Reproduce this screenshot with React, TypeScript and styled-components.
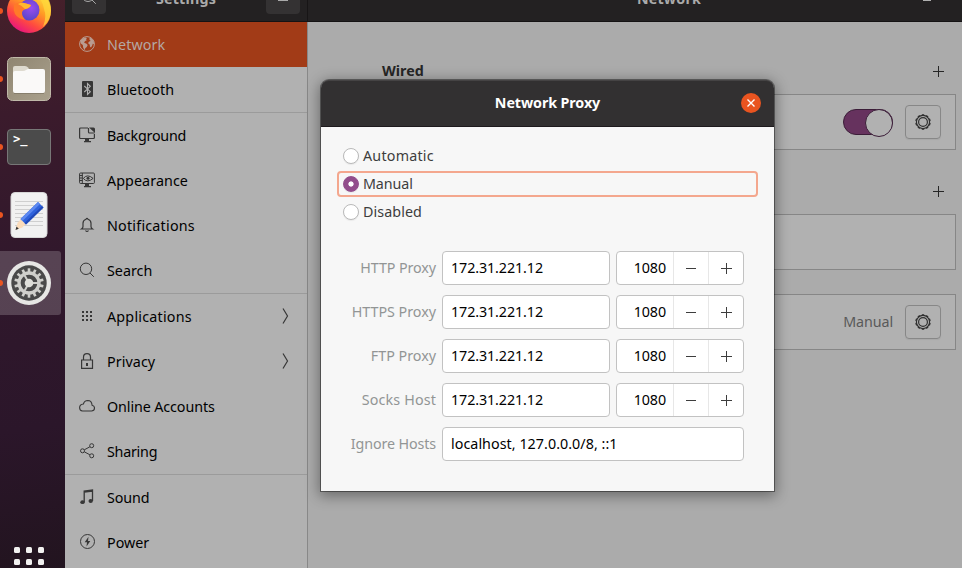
import React from 'react';
import styled, { createGlobalStyle } from 'styled-components';

const Global = createGlobalStyle`
  * { box-sizing: border-box; }
  html, body { margin: 0; padding: 0; overflow: hidden; }
  body { font-family: "Noto Sans", "Open Sans", sans-serif; font-size: 14.3px; color: #000; }
  svg { display: block; flex: none; }
`;

const Desktop = styled.div`
  position: relative;
  display: flex;
  width: 962px;
  height: 568px;
  overflow: hidden;
`;

const Dock = styled.nav`
  display: flex;
  flex-direction: column;
  gap: 4px;
  flex: none;
  width: 65px;
  height: 568px;
  overflow: hidden;
  background: linear-gradient(172deg, #45202a 0%, #3b1b2c 20%, #31182c 45%, #2b162a 75%, #22141f 100%);
`;

const DockItem = styled.div<{ $active?: boolean }>`
  position: relative;
  display: flex;
  align-items: center;
  justify-content: center;
  flex: none;
  width: 61px;
  height: 64px;
  padding-right: 3px;
  border-radius: 0 3px 3px 0;
  background: ${(p) => (p.$active ? 'rgba(255,255,255,0.19)' : 'transparent')};
  &:first-child { margin-top: -21px; }
  &::before {
    content: '';
    position: absolute;
    left: -3px;
    top: 29px;
    width: 6px;
    height: 6px;
    border-radius: 50%;
    background: #e95420;
  }
`;

const AppGrid = styled.div`
  display: grid;
  grid-template-columns: repeat(3, 6px);
  grid-auto-rows: 6px;
  gap: 6px;
  margin: auto 0 3px 14px;
`;

const GridDot = styled.i`
  border-radius: 1.5px;
  background: #f2f1f0;
`;

const Sidebar = styled.aside`
  display: flex;
  flex-direction: column;
  flex: none;
  width: 243px;
  border-right: 1px solid #888;
  background: #b1b1b1;
`;

const TitleBar = styled.header<{ $side?: boolean }>`
  display: flex;
  align-items: flex-end;
  justify-content: space-between;
  flex: none;
  height: 22px;
  width: ${(p) => (p.$side ? '243px' : 'auto')};
  padding: 0 7px 7px;
  overflow: hidden;
  background: #232122;
  border-bottom: 1px solid #151314;
  border-right: ${(p) => (p.$side ? '1px solid #171516' : '0')};
  color: #aaa;
`;

const BarButton = styled.div`
  display: flex;
  align-items: center;
  justify-content: center;
  width: 34px;
  height: 34px;
  border-radius: 4px;
  background: #343233;
`;

const BarTitle = styled.div<{ $inset?: number }>`
  flex: 1;
  padding: 0 0 5px ${(p) => p.$inset ?? 0}px;
  text-align: center;
  font-weight: 700;
  line-height: 20px;
  letter-spacing: 0.2px;
`;

const MinimizeMark = styled.i`
  width: 8px;
  height: 1px;
  margin: 0 24px 13px 0;
  background: #b0b0b0;
`;

const NavRow = styled.div<{ $active?: boolean; $divided?: boolean; $spacing: number }>`
  display: flex;
  align-items: center;
  flex: none;
  box-sizing: content-box;
  height: 45px;
  padding: 0 17px 0 14px;
  gap: 12px;
  border-bottom: ${(p) => (p.$divided ? '1px solid #9b9b9b' : '0')};
  background: ${(p) => (p.$active ? '#a23b17' : 'transparent')};
  color: ${(p) => (p.$active ? '#b5a8a3' : '#000')};
  letter-spacing: ${(p) => p.$spacing}px;
  line-height: 20px;
  > svg { margin-bottom: 1px; color: ${(p) => (p.$active ? '#b99c91' : '#373737')}; }
`;

const NavLabel = styled.span`
  flex: 1;
  white-space: nowrap;
`;

const Panel = styled.main`
  display: flex;
  flex-direction: column;
  flex: 1;
  background: #ababab;
`;

const PanelBody = styled.div`
  display: flex;
  flex-direction: column;
  padding: 35px 6px 0 74px;
`;

const SectionHead = styled.div`
  display: flex;
  align-items: center;
  justify-content: space-between;
  height: 28px;
  margin-bottom: 9px;
  padding-right: 12px;
  color: #262626;
  > svg { margin-left: auto; }
`;

const SectionTitle = styled.h2`
  margin: 0;
  font-size: 14.3px;
  line-height: 20px;
  font-weight: 700;
`;

const Card = styled.section<{ $after: number }>`
  display: flex;
  align-items: center;
  justify-content: flex-end;
  height: 56px;
  margin-bottom: ${(p) => p.$after}px;
  padding-right: 14px;
  border: 1px solid #868686;
  background: #b1b1b1;
`;

const CardValue = styled.span`
  padding-bottom: 1px;
  line-height: 20px;
  letter-spacing: -0.1px;
  color: #595959;
`;

const Toggle = styled.div`
  display: flex;
  justify-content: flex-end;
  width: 50px;
  height: 26px;
  border: 1px solid #3b1d38;
  border-radius: 13px;
  background: #66325e;
  &::after {
    content: '';
    width: 26px;
    height: 26px;
    margin: -1px;
    border: 1px solid #3b1d38;
    border-radius: 50%;
    background: #b1b1b1;
  }
`;

const GearButton = styled.div`
  display: flex;
  align-items: center;
  justify-content: center;
  width: 36px;
  height: 34px;
  margin-left: 12px;
  border: 1px solid #878787;
  border-radius: 4px;
  box-shadow: 0 1px 1px rgba(0, 0, 0, 0.06);
  color: #303030;
`;

const Dialog = styled.div`
  position: absolute;
  left: 321px;
  top: 80px;
  display: flex;
  flex-direction: column;
  width: 453px;
  height: 411px;
  border-radius: 8px 8px 0 0;
  background: #f7f7f7;
  box-shadow: 0 0 0 1px rgba(0, 0, 0, 0.4), 0 3px 14px 2px rgba(0, 0, 0, 0.38);
`;

const DialogBar = styled.header`
  display: grid;
  grid-template-columns: 1fr auto 1fr;
  align-items: center;
  height: 47px;
  padding: 0 13px;
  border-bottom: 1px solid #1e1a1d;
  border-radius: 8px 8px 0 0;
  background: #323031;
  box-shadow: inset 0 1px 0 #454344;
`;

const DialogTitle = styled.h1`
  grid-column: 2;
  margin: 0;
  font-size: 14.3px;
  line-height: 20px;
  font-weight: 700;
  letter-spacing: -0.1px;
  color: #fff;
`;

const CloseButton = styled.div`
  display: flex;
  align-items: center;
  justify-content: center;
  justify-self: end;
  width: 20px;
  height: 20px;
  border-radius: 50%;
  background: #e95420;
`;

const Choices = styled.div`
  display: flex;
  flex-direction: column;
  gap: 2px;
  padding: 16px 16px 0;
`;

const Choice = styled.div<{ $focused?: boolean; $spacing: number }>`
  display: flex;
  align-items: center;
  gap: 4px;
  height: 26px;
  padding-left: 4px;
  border: 2px solid ${(p) => (p.$focused ? '#f4a78e' : 'transparent')};
  border-radius: 4px;
  color: #3d3d3d;
  line-height: 20px;
  letter-spacing: ${(p) => p.$spacing}px;
`;

const Radio = styled.i<{ $on?: boolean }>`
  width: 16px;
  height: 16px;
  border: 1px solid ${(p) => (p.$on ? '#924d8b' : '#b9b9b9')};
  border-radius: 50%;
  background: ${(p) => (p.$on ? 'radial-gradient(circle, #fff 2.2px, #924d8b 3px)' : '#fff')};
  box-shadow: 0 1px 1px rgba(0, 0, 0, 0.06);
`;

const Form = styled.div`
  display: grid;
  grid-template-columns: 85px 168px 128px;
  grid-auto-rows: 34px;
  gap: 10px 6px;
  padding: 26px 0 0 30px;
`;

const Label = styled.label<{ $spacing: number }>`
  align-self: center;
  justify-self: end;
  color: #929595;
  line-height: 20px;
  white-space: nowrap;
  letter-spacing: ${(p) => p.$spacing}px;
`;

const Entry = styled.div<{ $wide?: boolean; $spacing: number }>`
  display: flex;
  align-items: center;
  grid-column: ${(p) => (p.$wide ? 'span 2' : 'auto')};
  padding: 0 8px;
  border: 1px solid #c2c2c2;
  border-radius: 4px;
  background: #fff;
  line-height: 20px;
  letter-spacing: ${(p) => p.$spacing}px;
`;

const Spin = styled.div`
  display: grid;
  grid-template-columns: 56px 35px 35px;
  border: 1px solid #c2c2c2;
  border-radius: 4px;
  background: #fff;
`;

const SpinValue = styled.span`
  align-self: center;
  justify-self: end;
  padding-right: 7px;
  line-height: 20px;
  letter-spacing: -0.1px;
`;

const SpinButton = styled.span`
  display: flex;
  align-items: center;
  justify-content: center;
  border-left: 1px solid #e7e7e7;
  color: #3d3d3d;
`;

const Plus = () => (
  <svg width="11" height="11" viewBox="0 0 11 11" stroke="currentColor"><path d="M0 5.5h11M5.5 0v11" /></svg>
);
const Minus = () => (
  <svg width="11" height="11" viewBox="0 0 11 11" stroke="currentColor"><path d="M0 5.5h10" /></svg>
);

const teeth = (n: number) => Array.from({ length: n }, (_, i) => (360 / n) * i);

const Gear = () => (
  <svg width="16" height="16" viewBox="0 0 16 16" fill="none" stroke="currentColor">
    <circle cx="8" cy="8" r="6.6" strokeWidth="1.2" />
    <circle cx="8" cy="8" r="4.4" strokeWidth="1.2" />
    {teeth(10).map((a) => (
      <path key={a} d="M6.8 .9h2.4" strokeWidth="1.3" transform={`rotate(${a} 8 8)`} />
    ))}
  </svg>
);

const icons: Record<string, React.ReactNode> = {
  network: (
    <>
      <circle cx="8" cy="8" r="7.4" />
      <path fill="currentColor" stroke="none" d="M1.2 4.8 3.500 2.500 6 1.500l2 .5-1 1.200.8 1-1.600.8L5 6.500l2.500 1.200 1.200 1.300-1 2-1.500 1.200-.5 2-1.500-2.400L3.800 9 1.800 7.500zM10.500 1.500l2.500 1.300 1.800 2.700.3 2.500-1.300-.3-.6 1.700-1.200 2.100-1-.7-.3-2.300-1.300-.8V6.200l1.300-1 1-.2-1.200-1.200z" />
    </>
  ),
  bluetooth: (
    <>
      <rect x="3" y="0" width="11" height="16" rx="1" fill="currentColor" stroke="none" />
      <path stroke="#b1b1b1" strokeWidth="1.1" d="m5.300 5 6 5.700L8.500 13.500V2.500l2.800 2.800L5.300 11" />
    </>
  ),
  background: (
    <>
      <path strokeWidth="1.2" d="M9 1H1.600Q.6 1 .6 2v8.500q0 1 1 1h12.800q1 0 1-1V7" />
      <path strokeWidth="1.2" d="M9.500 1v4q0 1 1 1h5" />
      <path fill="currentColor" stroke="none" d="M10 .5h4.500q1.500 0 1.500 1.500v4zM6 11h4v3h2v1.300H5V14h1z" />
    </>
  ),
  appearance: (
    <>
      <rect x=".6" y="1" width="14.8" height="10.5" rx="1" />
      <path d="M3.300 1v10M.5 3.500h3M.5 6h3M.5 8.500h3M4.300 6.400q4-5 9.800 0-5.800 5-9.800 0z" />
      <circle cx="9" cy="6.3" r="1.5" fill="currentColor" stroke="none" />
      <path fill="currentColor" stroke="none" d="M6 11h4v3h2v1.300H5V14h1z" />
    </>
  ),
  notifications: <path strokeWidth="1.2" d="M7 2.300q1-2 2 0 3 1 3 4v3.200q0 1.500 1.500 2.500h-11Q4 11 4 9.500V6.300q0-3 3-4zM6.500 13.500q1.500 2 3 0" />,
  search: (
    <>
      <circle cx="7" cy="6.8" r="5.7" />
      <path d="m11 11 3.800 3.800" />
    </>
  ),
  applications: (
    <>
      {[4, 8, 12].map((y) => [4, 8, 12].map((x) => (
        <rect key={`${x}-${y}`} x={x - 1} y={y - 1} width="2" height="2" fill="currentColor" stroke="none" />
      )))}
    </>
  ),
  privacy: (
    <>
      <path strokeWidth="1.2" d="M2.600 7h10.900v8.400H2.600zM4.500 7V4.200q0-3.600 3.500-3.600t3.500 3.600V7" />
      <path strokeWidth="2" d="M8 10v3" />
    </>
  ),
  cloud: <path strokeWidth="1.1" d="M3.500 13h9q3-.2 3-3 0-2.300-2.400-2.800Q12.700 2.600 8.800 2.500 5.300 2.500 4.400 6 .6 6.400.6 9.700.7 12.600 3.500 13z" />,
  sharing: (
    <>
      <circle cx="12.7" cy="2.7" r="2" />
      <circle cx="3.5" cy="7.8" r="2" />
      <circle cx="12.7" cy="12.8" r="2" />
      <path d="m5.300 6.800 5.600-3M5.300 8.800l5.600 3" />
    </>
  ),
  sound: (
    <>
      <path d="M5.200 13V2l8.300-1v11M5.200 3l8.300-1" strokeWidth="1.3" />
      <ellipse cx="3.5" cy="13.2" rx="2.2" ry="1.9" fill="currentColor" stroke="none" />
      <ellipse cx="11.7" cy="12" rx="2.2" ry="1.9" fill="currentColor" stroke="none" />
    </>
  ),
  power: (
    <>
      <circle cx="8.5" cy="7.5" r="7" />
      <path fill="currentColor" stroke="none" d="M9.500 2.800 5.700 8.300H8L7.500 12.500 11.300 7H9z" />
    </>
  ),
};

const Icon = ({ name }: { name: string }) => (
  <svg width="16" height="16" viewBox="0 0 16 16" fill="none" stroke="currentColor">{icons[name]}</svg>
);

const Chevron = () => (
  <svg width="9" height="16" viewBox="0 0 9 16" fill="none" stroke="currentColor">
    <path strokeWidth="1.2" d="m2 .5 4.500 7.500L2 15.500" />
  </svg>
);

const Firefox = () => (
  <svg width="46" height="46" viewBox="0 0 46 46">
    <defs>
      <linearGradient id="fx" x1=".85" y1=".2" x2=".35" y2="1">
        <stop offset="0" stopColor="#ffd83c" />
        <stop offset=".35" stopColor="#ff9a24" />
        <stop offset=".7" stopColor="#ff4a40" />
        <stop offset="1" stopColor="#e8177c" />
      </linearGradient>
      <radialGradient id="fxCore" cx=".6" cy=".4" r=".6">
        <stop offset="0" stopColor="#9a4df0" />
        <stop offset="1" stopColor="#5a45c8" />
      </radialGradient>
    </defs>
    <circle cx="23" cy="23" r="22" fill="url(#fx)" />
    <path d="M36 3q9 7 9 19 0 10-8 17 4-10 1-18-1-8-7-13z" fill="#ffd83c" opacity=".7" />
    <circle cx="23" cy="22" r="10.5" fill="url(#fxCore)" />
    <path d="M8 17q4-4 10-2l7 2q-1 3-5 4-4 1-4 4 0 4 4 7-8-1-11-6-2-4-1-9z" fill="#ff7a28" />
    <path d="M12 16q4-2 8-.5l5 1.500q-1 3-6 4-4-4-7-5z" fill="#ffb92e" />
  </svg>
);

const Files = () => (
  <svg width="46" height="46" viewBox="0 0 46 46">
    <defs><linearGradient id="files" x1="0" y1="0" x2="1" y2="1"><stop stopColor="#8f8571" /><stop offset="1" stopColor="#aaa18d" /></linearGradient></defs>
    <rect x="1.5" y="1.5" width="43" height="43" rx="5" fill="url(#files)" stroke="#c0b9a9" />
    <path d="M7 25V12q0-2 2-2h10q2 0 3 1.500l1 1.500v7z" fill="#dedacf" />
    <path d="M7 17q0-2 2-2h8q2 0 3-1l2-1h15q2 0 2 2v20q0 2-2 2H9q-2 0-2-2z" fill="#faf9f8" />
    <path d="M8 37.500h30" stroke="#6f6758" opacity=".5" />
  </svg>
);

const TerminalTile = styled.div`
  width: 44px;
  height: 36px;
  padding: 2px 0 0 5px;
  border: 1px solid #777;
  border-radius: 4px;
  background: #4b4b4b;
  color: #fff;
  font: 700 12px/14px "DejaVu Sans Mono", monospace;
`;

const Editor = () => (
  <svg width="38" height="46" viewBox="0 0 38 46">
    <rect x="1" y=".5" width="36" height="45" rx="4" fill="#f1f1f1" stroke="#d6d6d6" />
    <path d="M5 9.500h28M5 13.500h28M5 17.500h28M5 21.500h28M5 25.500h28M5 29.500h28M5 33.500h28" stroke="#cfcfcf" />
    <path d="M5.500 38 8 29.500l5.500 5.500z" fill="#fbdcbb" />
    <path d="m10.500 27 5.500 5.500-5.500 3.500-3.300-3.300z" fill="#fbdcbb" />
    <path d="m5.500 38 1-3.500 2.300 2.300z" fill="#333" />
    <path d="m10.500 27 17.500-17 5.500 5.500-17.500 17z" fill="#2f62dc" />
    <path d="m10.500 27 17.500-17 2 2-17.500 17z" fill="#5c88f0" />
    <path d="m14.500 31 17.500-17 1.500 1.500-17.500 17z" fill="#2149b8" />
  </svg>
);

const SettingsApp = () => (
  <svg width="46" height="46" viewBox="0 0 46 46">
    <circle cx="23" cy="23" r="22" fill="#e6e6e4" />
    <circle cx="23" cy="23" r="17.7" fill="#494949" />
    <g fill="none" stroke="#cfcfcb">
      <circle cx="23" cy="23" r="10" strokeWidth="3.3" />
      {teeth(14).map((a) => <path key={a} d="M23 8.300v4" strokeWidth="2.6" transform={`rotate(${a} 23 23)`} />)}
      {[90, 210, 330].map((a) => <path key={a} d="M23 14v7" strokeWidth="2" transform={`rotate(${a} 23 23)`} />)}
    </g>
    <circle cx="23" cy="23" r="4.3" fill="#deded9" />
  </svg>
);

interface NavEntry { label: string; icon: string; spacing: number; active?: boolean; divided?: boolean; submenu?: boolean }
const nav: NavEntry[] = [
  { label: 'Network', icon: 'network', spacing: 0.1, active: true },
  { label: 'Bluetooth', icon: 'bluetooth', spacing: 0.1, divided: true },
  { label: 'Background', icon: 'background', spacing: -0.22 },
  { label: 'Appearance', icon: 'appearance', spacing: 0.08 },
  { label: 'Notifications', icon: 'notifications', spacing: 0.22 },
  { label: 'Search', icon: 'search', spacing: 0, divided: true },
  { label: 'Applications', icon: 'applications', spacing: 0.22, submenu: true },
  { label: 'Privacy', icon: 'privacy', spacing: 0.08, submenu: true },
  { label: 'Online Accounts', icon: 'cloud', spacing: -0.1 },
  { label: 'Sharing', icon: 'sharing', spacing: -0.25, divided: true },
  { label: 'Sound', icon: 'sound', spacing: -0.1 },
  { label: 'Power', icon: 'power', spacing: 0 },
];

const proxies = [
  { label: 'HTTP Proxy', spacing: -0.1 },
  { label: 'HTTPS Proxy', spacing: -0.02 },
  { label: 'FTP Proxy', spacing: 0 },
  { label: 'Socks Host', spacing: 0.15 },
];

export default function App() {
  return (
    <>
      <Global />
      <Desktop>
        <Dock>
          <DockItem><Firefox /></DockItem>
          <DockItem><Files /></DockItem>
          <DockItem><TerminalTile>&gt;_</TerminalTile></DockItem>
          <DockItem><Editor /></DockItem>
          <DockItem $active><SettingsApp /></DockItem>
          <AppGrid>{[0, 1, 2, 3, 4, 5].map((i) => <GridDot key={i} />)}</AppGrid>
        </Dock>
        <Sidebar>
          <TitleBar $side>
            <BarButton><Icon name="search" /></BarButton>
            <BarTitle>Settings</BarTitle>
            <BarButton>
              <svg width="10" height="12" viewBox="0 0 10 12" stroke="currentColor"><path d="M0 2.500h10M0 6.500h10M0 9.500h10" /></svg>
            </BarButton>
          </TitleBar>
          {nav.map((n) => (
            <NavRow key={n.label} $active={n.active} $divided={n.divided} $spacing={n.spacing}>
              <Icon name={n.icon} />
              <NavLabel>{n.label}</NavLabel>
              {n.submenu && <Chevron />}
            </NavRow>
          ))}
        </Sidebar>
        <Panel>
          <TitleBar>
            <BarTitle $inset={100}>Network</BarTitle>
            <MinimizeMark />
          </TitleBar>
          <PanelBody>
            <SectionHead><SectionTitle>Wired</SectionTitle><Plus /></SectionHead>
            <Card $after={27}>
              <Toggle />
              <GearButton><Gear /></GearButton>
            </Card>
            <SectionHead><Plus /></SectionHead>
            <Card $after={24} />
            <Card $after={0}>
              <CardValue>Manual</CardValue>
              <GearButton><Gear /></GearButton>
            </Card>
          </PanelBody>
        </Panel>
        <Dialog>
          <DialogBar>
            <DialogTitle>Network Proxy</DialogTitle>
            <CloseButton>
              <svg width="8" height="8" viewBox="0 0 8 8" stroke="#fff" strokeWidth="1.4"><path d="m.5.500 7 7m0-7-7 7" /></svg>
            </CloseButton>
          </DialogBar>
          <Choices>
            <Choice $spacing={0.22}><Radio />Automatic</Choice>
            <Choice $focused $spacing={-0.1}><Radio $on />Manual</Choice>
            <Choice $spacing={0.08}><Radio />Disabled</Choice>
          </Choices>
          <Form>
            {proxies.map((p) => (
              <React.Fragment key={p.label}>
                <Label $spacing={p.spacing}>{p.label}</Label>
                <Entry $spacing={-0.1}>172.31.221.12</Entry>
                <Spin>
                  <SpinValue>1080</SpinValue>
                  <SpinButton><Minus /></SpinButton>
                  <SpinButton><Plus /></SpinButton>
                </Spin>
              </React.Fragment>
            ))}
            <Label $spacing={-0.12}>Ignore Hosts</Label>
            <Entry $wide $spacing={0.04}>localhost, 127.0.0.0/8, ::1</Entry>
          </Form>
        </Dialog>
      </Desktop>
    </>
  );
}
